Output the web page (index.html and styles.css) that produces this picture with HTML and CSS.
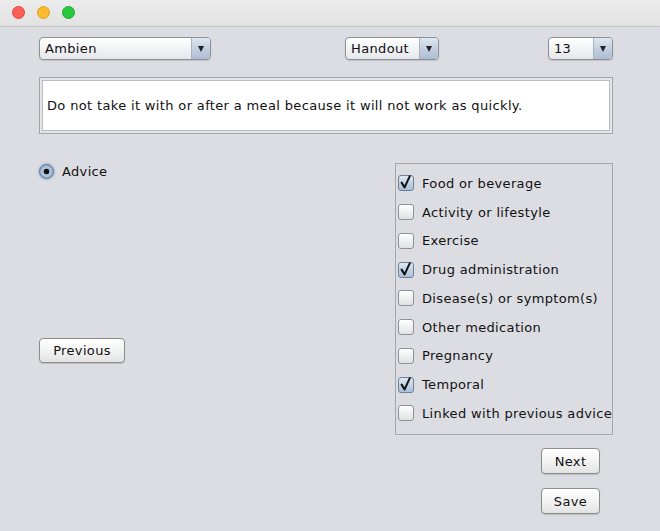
FILE: index.html
```html
<!DOCTYPE html>
<html>
<head>
<meta charset="utf-8">
<title>Advice editor</title>
<link rel="stylesheet" href="styles.css">
</head>
<body>
<div class="window">
  <div class="titlebar">
    <span class="light red"></span>
    <span class="light yellow"></span>
    <span class="light green"></span>
  </div>
  <div class="content">
    <div class="toprow">
      <div class="combo combo-drug"><span class="combo-value">Ambien</span><span class="combo-arrow"></span></div>
      <div class="combo combo-source"><span class="combo-value">Handout</span><span class="combo-arrow"></span></div>
      <div class="combo combo-num"><span class="combo-value">13</span><span class="combo-arrow"></span></div>
    </div>
    <div class="textframe">
      <div class="textbox">Do not take it with or after a meal because it will not work as quickly.</div>
    </div>
    <div class="main">
      <div class="leftcol">
        <label class="radio"><span class="radio-dot"></span>Advice</label>
        <button class="btn btn-prev">Previous</button>
      </div>
      <div class="panel">
        <label class="check"><span class="box checked"><svg class="tick" viewBox="0 0 16 16"><path d="M3.6 7.6 L6.6 12.4 L11.8 1.2"/></svg></span>Food or beverage</label>
        <label class="check"><span class="box"></span>Activity or lifestyle</label>
        <label class="check"><span class="box"></span>Exercise</label>
        <label class="check"><span class="box checked"><svg class="tick" viewBox="0 0 16 16"><path d="M3.6 7.6 L6.6 12.4 L11.8 1.2"/></svg></span>Drug administration</label>
        <label class="check"><span class="box"></span>Disease(s) or symptom(s)</label>
        <label class="check"><span class="box"></span>Other medication</label>
        <label class="check"><span class="box"></span>Pregnancy</label>
        <label class="check"><span class="box checked"><svg class="tick" viewBox="0 0 16 16"><path d="M3.6 7.6 L6.6 12.4 L11.8 1.2"/></svg></span>Temporal</label>
        <label class="check"><span class="box"></span>Linked with previous advice</label>
      </div>
    </div>
    <div class="actions">
      <button class="btn btn-small">Next</button>
      <button class="btn btn-small">Save</button>
    </div>
  </div>
</div>
</body>
</html>
```
FILE: styles.css
```css
* { box-sizing: border-box; }

html, body {
  margin: 0;
  padding: 0;
  background: #dcdde2;
}

body {
  font-family: "DejaVu Sans", "Liberation Sans", sans-serif;
  font-size: 13px;
  letter-spacing: 0.35px;
  color: #111;
}

.window {
  width: 660px;
  height: 531px;
  background: #dcdde2;
  overflow: hidden;
}

/* title bar with the three window buttons */
.titlebar {
  height: 27px;
  background: linear-gradient(#ececec, #e2e2e2);
  border-bottom: 1px solid #c4c4c4;
  display: flex;
  align-items: center;
  padding-left: 12px;
  gap: 12px;
  padding-bottom: 1px;
}

.light {
  width: 13px;
  height: 13px;
  border-radius: 50%;
}
.light.red { background: #fc5f57; border: 1px solid #e2463f; }
.light.yellow { background: #fdbc2e; border: 1px solid #e0a028; }
.light.green { background: #28c840; border: 1px solid #1eab2e; }

.content {
  padding: 10px 47px 0 39px;
}

/* combo boxes */
.toprow {
  display: flex;
  height: 23px;
}

.combo {
  display: flex;
  height: 23px;
  border: 1px solid #8c8f96;
  border-radius: 4px;
  background: linear-gradient(#ffffff, #f2f3f5 50%, #e6e7ea);
  box-shadow: 0 1px 1px rgba(0, 0, 0, 0.12);
  overflow: hidden;
}

.combo-value {
  flex: 1;
  padding-left: 5px;
  line-height: 21px;
}

.combo-arrow {
  width: 19px;
  border-left: 1px solid #a9b4c3;
  background: linear-gradient(#dfe7f1, #c2d0e0 50%, #aebfd3);
  position: relative;
}
.combo-arrow::after {
  content: "";
  position: absolute;
  left: 6px;
  top: 8px;
  border-left: 3.5px solid transparent;
  border-right: 3.5px solid transparent;
  border-top: 6px solid #222;
}

.combo-drug { width: 172px; }
.combo-source { width: 94px; margin-left: 134px; }
.combo-num { width: 65px; margin-left: auto; }

/* advice text */
.textframe {
  margin-top: 17px;
  height: 57px;
  border: 1px solid #a3a5aa;
  padding: 2px;
  background: #e4e5e9;
}

.textbox {
  height: 100%;
  background: #fff;
  border: 1px solid #b9bbc0;
  padding-left: 4px;
  display: flex;
  align-items: center;
}

/* main area */
.main {
  display: flex;
  margin-top: 29px;
}

.leftcol {
  flex: 1;
  display: flex;
  flex-direction: column;
  align-items: flex-start;
}

.radio {
  display: flex;
  align-items: center;
  margin-top: 1px;
  gap: 8px;
}

.radio-dot {
  width: 15px;
  height: 15px;
  border-radius: 50%;
  border: 1px solid #5d6f86;
  background: radial-gradient(circle, #111 0 2.6px, #b9cde4 3.2px, #8eaacb 7px);
  box-shadow: 0 0 2px 1px rgba(110, 150, 200, 0.45);
}

.btn {
  font-family: inherit;
  font-size: 13px;
  letter-spacing: 0.35px;
  color: #111;
  height: 25px;
  border: 1px solid #8d8d8d;
  border-radius: 4px;
  background: linear-gradient(#ffffff, #f3f3f3 50%, #e3e3e3);
  box-shadow: 0 1px 1px rgba(0, 0, 0, 0.15);
  padding: 0;
}

.btn-prev {
  width: 86px;
  margin-top: 159px;
}

/* checkbox panel */
.panel {
  width: 218px;
  height: 272px;
  border: 1px solid #a6a8ad;
  padding: 5px 0 0 2px;
  display: flex;
  flex-direction: column;
}

.check {
  height: 28.75px;
  display: flex;
  align-items: center;
  gap: 8px;
  white-space: nowrap;
}

.box {
  width: 16px;
  height: 16px;
  border: 1px solid #8e9095;
  border-radius: 3px;
  background: linear-gradient(#ffffff, #f0f0f0 50%, #e2e2e4);
  position: relative;
  flex: none;
}

.box.checked {
  background: linear-gradient(#dfe8f3, #c3d3e6 50%, #a9c0da);
  border-color: #6f7f94;
}

.tick {
  position: absolute;
  left: -1px;
  top: -1px;
  width: 16px;
  height: 16px;
  overflow: visible;
}
.tick path {
  fill: none;
  stroke: #111;
  stroke-width: 2;
  stroke-linecap: round;
  stroke-linejoin: round;
}

/* bottom buttons */
.actions {
  display: flex;
  flex-direction: column;
  align-items: flex-end;
  gap: 14px;
  margin-top: 13px;
  padding-right: 13px;
}

.btn-small {
  width: 59px;
  height: 26px;
}
```
